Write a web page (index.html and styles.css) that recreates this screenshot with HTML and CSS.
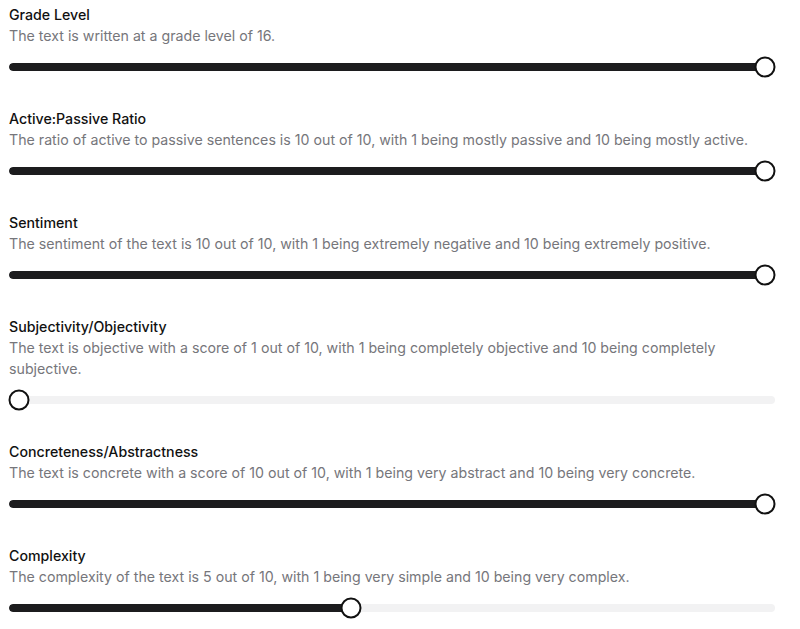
FILE: index.html
```html
<!DOCTYPE html>
<html>
<head>
<meta charset="utf-8">
<link rel="stylesheet" href="styles.css">
</head>
<body>
<div class="list">
  <section class="metric">
    <h3 class="title">Grade Level</h3>
    <p class="desc">The text is written at a grade level of 16.</p>
    <div class="slider"><div class="track"><div class="fill" style="width:100%"></div></div><div class="rail"><div class="thumb" style="left:100%"></div></div></div>
  </section>
  <section class="metric">
    <h3 class="title">Active:Passive Ratio</h3>
    <p class="desc">The ratio of active to passive sentences is 10 out of 10, with 1 being mostly passive and 10 being mostly active.</p>
    <div class="slider"><div class="track"><div class="fill" style="width:100%"></div></div><div class="rail"><div class="thumb" style="left:100%"></div></div></div>
  </section>
  <section class="metric">
    <h3 class="title">Sentiment</h3>
    <p class="desc">The sentiment of the text is 10 out of 10, with 1 being extremely negative and 10 being extremely positive.</p>
    <div class="slider"><div class="track"><div class="fill" style="width:100%"></div></div><div class="rail"><div class="thumb" style="left:100%"></div></div></div>
  </section>
  <section class="metric">
    <h3 class="title">Subjectivity/Objectivity</h3>
    <p class="desc">The text is objective with a score of 1 out of 10, with 1 being completely objective and 10 being completely subjective.</p>
    <div class="slider"><div class="track"><div class="fill" style="width:0px"></div></div><div class="rail"><div class="thumb" style="left:0%"></div></div></div>
  </section>
  <section class="metric">
    <h3 class="title">Concreteness/Abstractness</h3>
    <p class="desc">The text is concrete with a score of 10 out of 10, with 1 being very abstract and 10 being very concrete.</p>
    <div class="slider"><div class="track"><div class="fill" style="width:100%"></div></div><div class="rail"><div class="thumb" style="left:100%"></div></div></div>
  </section>
  <section class="metric">
    <h3 class="title">Complexity</h3>
    <p class="desc">The complexity of the text is 5 out of 10, with 1 being very simple and 10 being very complex.</p>
    <div class="slider"><div class="track"><div class="fill" style="width:calc(10px + (100% - 20px) * 0.4444)"></div></div><div class="rail"><div class="thumb" style="left:44.44%"></div></div></div>
  </section>
</div>
</body>
</html>
```
FILE: styles.css
```css
html, body {
  margin: 0;
  padding: 0;
  background: #ffffff;
}
body {
  font-family: Inter, "Noto Sans", "Liberation Sans", sans-serif;
  -webkit-font-smoothing: antialiased;
}
.list {
  padding: 3.5px 25px 0 9px;
  display: flex;
  flex-direction: column;
}
.metric {
  display: flex;
  flex-direction: column;
  padding-bottom: 31px;
}
.title {
  margin: 0;
  font-size: 14.2px;
  line-height: 21px;
  font-weight: 500;
  color: #111111;
}
.desc {
  margin: 0;
  font-size: 14.2px;
  line-height: 21px;
  font-weight: 400;
  color: #76767b;
  max-width: 740px;
}
.slider {
  position: relative;
  height: 20px;
  margin-top: 11px;
  display: flex;
  align-items: center;
}
.track {
  width: 100%;
  height: 8px;
  border-radius: 4px;
  background: #f2f2f3;
  overflow: hidden;
}
.fill {
  height: 100%;
  background: #1c1c1e;
  border-radius: 4px;
}
.rail {
  position: absolute;
  top: 0;
  bottom: 0;
  left: 10px;
  right: 10px;
}
.thumb {
  position: absolute;
  top: 0;
  width: 21px;
  height: 21px;
  box-sizing: border-box;
  border: 2.5px solid #111111;
  border-radius: 50%;
  background: #ffffff;
  transform: translate(-50%, -0.5px);
}
```
